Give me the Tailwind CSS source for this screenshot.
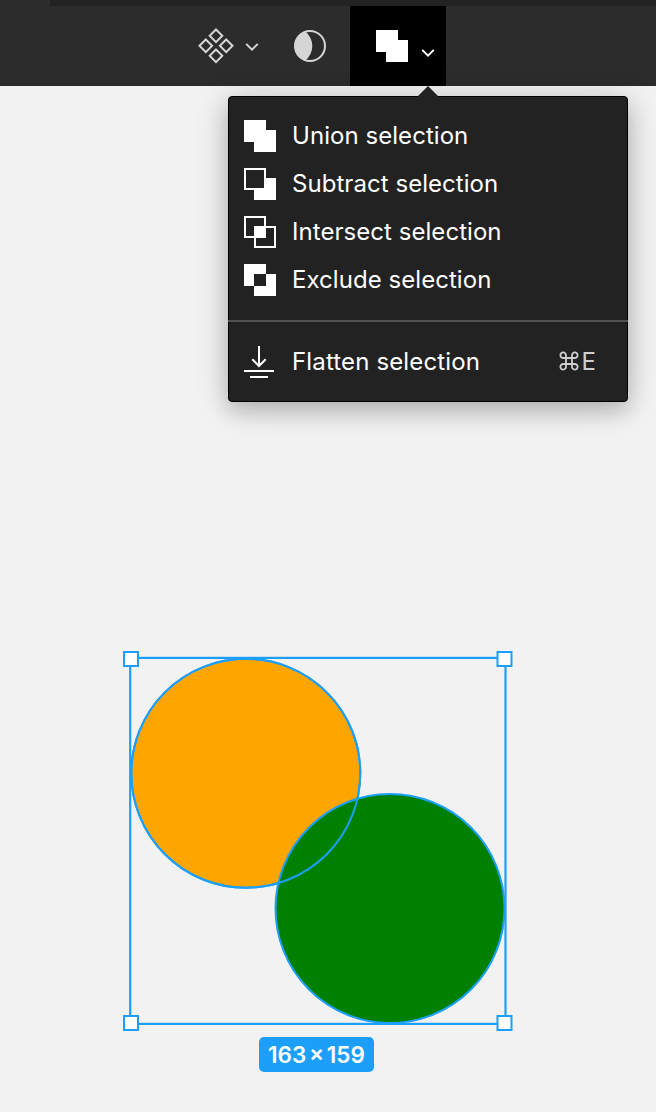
<!DOCTYPE html>
<html lang="en">
<head>
<meta charset="utf-8">
<title>Boolean operations</title>
<script src="https://cdn.jsdelivr.net/npm/@tailwindcss/browser@4"></script>
</head>
<body class="relative flex h-[1112px] w-[656px] flex-col overflow-hidden bg-[#f2f2f2] font-['Inter',sans-serif]">
  <div class="flex h-1.5 shrink-0 bg-[#2c2c2c] pl-[50px]"><div class="flex-1 bg-[#222222]"></div></div>
  <header class="flex h-20 shrink-0 items-center bg-[#2c2c2c] pl-[196px]">
    <button class="flex h-20 w-[96px] items-center" aria-label="Components">
      <svg class="h-10 w-16" viewBox="196 26 64 40" fill="none" stroke="#d6d6d6" stroke-width="2">
        <path d="M216 29.5l6.3 6.3-6.3 6.3-6.3-6.3zM205.8 39.5l6.3 6.3-6.3 6.3-6.3-6.3zM226.2 39.5l6.3 6.3-6.3 6.3-6.3-6.3zM216 49.5l6.3 6.3-6.3 6.3-6.3-6.3z"/>
        <path d="M246.2 43.9l5.8 5.8 5.8-5.8"/>
      </svg>
    </button>
    <button class="flex h-20 w-[58px] items-center" aria-label="Mask">
      <svg class="h-9 w-9" viewBox="292 28 36 36">
        <circle cx="310" cy="46" r="15" fill="none" stroke="#d6d6d6" stroke-width="2"/>
        <path d="M305.3 31.5A18.5 18.5 0 0 1 305.3 60.5A15.3 15.3 0 0 1 305.3 31.5z" fill="#d6d6d6"/>
      </svg>
    </button>
    <button class="flex h-20 w-24 items-center bg-black" aria-label="Boolean groups">
      <svg class="h-20 w-24" viewBox="350 6 96 80">
        <path d="M376 30h22v10h10v22h-22V52h-10z" fill="#fff"/>
        <path d="M422.2 49.9l5.8 5.8 5.8-5.8" fill="none" stroke="#fff" stroke-width="2"/>
      </svg>
    </button>
  </header>

  <main class="relative flex-1">
    <svg class="absolute top-0 left-0 h-[1026px] w-[656px]" viewBox="0 86 656 1026" stroke="#1b9ffb" stroke-width="2">
      <circle cx="245.8" cy="773.3" r="114.5" fill="#ffa500"/>
      <circle cx="390" cy="908.5" r="114.5" fill="#008000"/>
      <circle cx="245.8" cy="773.3" r="114.5" fill="none"/>
      <rect x="130.2" y="657.9" width="375.3" height="366" fill="none" stroke-width="2.2"/>
      <g fill="#fff">
        <rect x="124" y="652" width="14" height="14"/>
        <rect x="497.5" y="652" width="14" height="14"/>
        <rect x="124" y="1016" width="14" height="14"/>
        <rect x="497.5" y="1016" width="14" height="14"/>
      </g>
    </svg>
    <div class="absolute top-[951px] left-[259px] flex h-[35px] w-[115px] items-center justify-center rounded-[5px] bg-[#1b9ffb] pt-0.5 text-[22.5px] leading-none font-semibold whitespace-nowrap text-white [word-spacing:-3px]">163 × 159</div>

    <svg class="absolute top-0 left-[416px] z-10 h-3 w-6" viewBox="0 0 24 12"><path d="M1 11L12 0l11 11z" fill="#222"/></svg>
    <nav class="absolute top-[10px] left-[228px] flex h-[306px] w-[400px] flex-col rounded-[4px] border border-black bg-[#222222] text-2xl leading-8 font-normal tracking-[0.05px] text-white shadow-[0_4px_34px_rgba(0,0,0,0.2),0_10px_20px_rgba(0,0,0,0.14)]">
      <ul class="flex h-[223px] flex-col gap-4 pt-[23px] pl-[15px]">
        <li class="flex h-8 items-center gap-4">
          <svg class="size-8" viewBox="0 0 32 32" fill="#fff"><path d="M0 0h22v10h10v22H10V22H0z"/></svg>
          <span>Union selection</span>
        </li>
        <li class="flex h-8 items-center gap-4">
          <svg class="size-8" viewBox="0 0 32 32" fill="#fff"><path d="M22 10h10v22H10V22h12z"/><path d="M1 1h20v20H1z" fill="none" stroke="#fff" stroke-width="2"/></svg>
          <span>Subtract selection</span>
        </li>
        <li class="flex h-8 items-center gap-4">
          <svg class="size-8" viewBox="0 0 32 32" fill="none" stroke="#fff" stroke-width="2"><path d="M1 1h20v20H1zM11 11h20v20H11z"/><path d="M10 10h12v12H10z" fill="#fff" stroke="none"/></svg>
          <span>Intersect selection</span>
        </li>
        <li class="flex h-8 items-center gap-4">
          <svg class="size-8" viewBox="0 0 32 32" fill="#fff"><path d="M0 0h22v10H10v12H0zM22 10h10v22H10V22h12z"/></svg>
          <span>Exclude selection</span>
        </li>
      </ul>
      <div class="-mx-px h-0.5 shrink-0 bg-[#515151]"></div>
      <div class="flex flex-1 items-center gap-4 pr-[31px] pl-[15px]">
        <svg class="size-8" viewBox="244 346 32 32" fill="none" stroke="#fff" stroke-width="2"><path d="M259 346v20M252.3 359.3l6.7 6.7 6.7-6.7M244 371h30M250 377h18"/></svg>
        <span class="tracking-[0.14px]">Flatten selection</span>
        <span class="ml-auto flex items-center gap-[3px] text-[#cfcfcf]">
          <svg class="mb-0.5 h-5 w-5" viewBox="0 0 20 20" fill="none" stroke="#cfcfcf" stroke-width="1.8"><path d="M7 7h6v6H7zM7 7H4.3A2.8 2.8 0 1 1 7 4.3zM13 7V4.3A2.8 2.8 0 1 1 15.7 7zM13 13h2.7a2.8 2.8 0 1 1-2.7 2.7zM7 13v2.7A2.8 2.8 0 1 1 4.3 13z"/></svg>
          <span>E</span>
        </span>
      </div>
    </nav>
  </main>
</body>
</html>
